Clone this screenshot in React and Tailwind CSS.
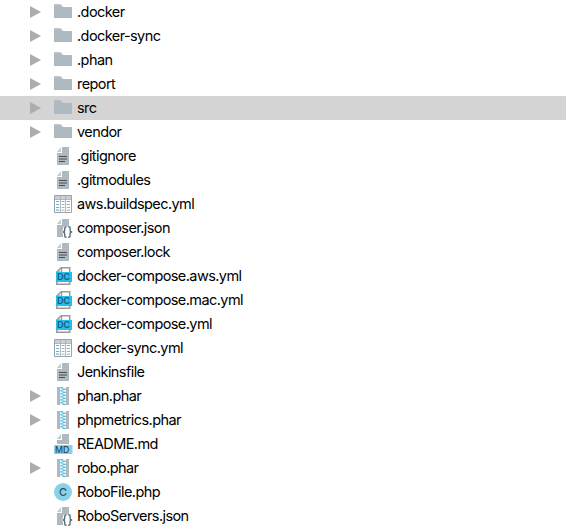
const GREY = '#aeb9c0';

function Page() {
  return (
    <g fill={GREY}>
      <path d="M8 0H15V18H3V6H8Z" />
      <path d="M7 0V5H3L7 0Z" fillOpacity=".75" />
    </g>
  );
}

function FolderIcon() {
  return <path d="M0 1.3H6.6L9 4H18V15H0Z" fill={GREY} />;
}

function TextIcon() {
  return (
    <>
      <Page />
      <path d="M5 9.5H13M5 12H13M5 14.5H11" stroke="#4b5054" strokeWidth="1.1" />
    </>
  );
}

function TableIcon() {
  return (
    <>
      <path d="M.5 .5H17.5V17.5H.5Z" fill="#fff" stroke="#97a3ad" />
      <path d="M1 1H17V4H1Z" fill="#c9d1d6" />
      <path d="M1 4.5H17M6.5 1V17M11.5 1V17" stroke="#a5b1ba" strokeWidth=".9" />
      <path d="M2 6.5H5.3M2 9.5H5.3M2 12.5H5.3M2 15.2H5.3" stroke="#6fb3d0" strokeWidth="1.2" />
      <path d="M7.7 6.5H10.5M12.7 6.5H16M7.7 9.5H10.5M12.7 9.5H16M7.7 12.5H10.5M12.7 12.5H16M7.7 15.2H10.5M12.7 15.2H16" stroke="#9eadb7" strokeWidth="1" />
    </>
  );
}

function JsonIcon() {
  return (
    <>
      <path d="M8 0H15V7H10L9 9V11.5L7.5 13L9 14.5V18H3V6H8Z" fill={GREY} />
      <path d="M7 0V5H3Z" fill={GREY} fillOpacity=".75" />
      <g fill="none" stroke="#5d6f7e" strokeWidth="1.4">
        <path d="M12.6 7.7H12Q10.7 7.7 10.7 9.2V11.2Q10.7 13 8.6 13Q10.7 13 10.7 14.8V16.8Q10.7 18.3 12 18.3H12.6" />
        <path d="M14.2 7.7H14.8Q16.1 7.7 16.1 9.2V11.2Q16.1 13 18.2 13Q16.1 13 16.1 14.8V16.8Q16.1 18.3 14.8 18.3H14.2" />
      </g>
    </>
  );
}

function DockerComposeIcon() {
  return (
    <>
      <path d="M7.2 .8H15.7V17.2H2.8V5.2Z" fill="#fff" stroke="#9a9a9a" strokeWidth="1.6" />
      <path d="M7.6 1V5.2H3" fill="none" stroke="#9a9a9a" strokeWidth="1.2" />
      <path d="M2 5H18V15H2Z" fill="#23bced" />
      <text x="9.7" y="13.2" textAnchor="middle" fontSize="8.8" fontWeight="600" fill="#24566d">DC</text>
    </>
  );
}

function ArchiveIcon() {
  return (
    <>
      <path d="M3 0H15V18H3Z" fill={GREY} />
      <path d="M6 0H12V18H6Z" fill="#edf8fc" />
      {[0, 3, 6, 9, 12, 15].map((y) => (
        <path key={y} d={`M6.3 ${y + 0.8}H9.3M8.7 ${y + 2.3}H11.7`} stroke="#52b9dc" strokeWidth="1.2" />
      ))}
    </>
  );
}

function MarkdownIcon() {
  return (
    <>
      <path d="M8 -1H15V9H3V5H8Z" fill={GREY} />
      <path d="M7 -1V4H3Z" fill={GREY} fillOpacity=".75" />
      <path d="M0 10H18.5V19H0Z" fill="#8ad1ea" />
      <text x="8.2" y="17.8" textAnchor="middle" fontSize="8.8" fontWeight="500" fill="#294b5a">MD</text>
    </>
  );
}

function ClassIcon() {
  return (
    <>
      <circle cx="9" cy="9" r="9" fill="#8ad1ea" />
      <text x="9" y="13" textAnchor="middle" fontSize="11" fontWeight="500" fill="#31505f">C</text>
    </>
  );
}

const files = [
  ['.docker', FolderIcon, true],
  ['.docker-sync', FolderIcon, true],
  ['.phan', FolderIcon, true],
  ['report', FolderIcon, true],
  ['src', FolderIcon, true],
  ['vendor', FolderIcon, true],
  ['.gitignore', TextIcon],
  ['.gitmodules', TextIcon],
  ['aws.buildspec.yml', TableIcon],
  ['composer.json', JsonIcon],
  ['composer.lock', TextIcon],
  ['docker-compose.aws.yml', DockerComposeIcon],
  ['docker-compose.mac.yml', DockerComposeIcon],
  ['docker-compose.yml', DockerComposeIcon],
  ['docker-sync.yml', TableIcon],
  ['Jenkinsfile', TextIcon],
  ['phan.phar', ArchiveIcon, true],
  ['phpmetrics.phar', ArchiveIcon, true],
  ['README.md', MarkdownIcon],
  ['robo.phar', ArchiveIcon, true],
  ['RoboFile.php', ClassIcon],
  ['RoboServers.json', JsonIcon],
];

export default function App() {
  return (
    <ul className="h-[531px] w-[566px] overflow-hidden bg-white font-['Inter',sans-serif] text-[14.5px] tracking-[-0.58px] text-black">
      {files.map(([name, Icon, expandable]) => (
        <li key={name} className={`flex h-6 items-center pl-[30px] ${name === 'src' ? 'bg-[#d4d4d4]' : ''}`}>
          <svg className="mr-[13px] h-3 w-[11px] shrink-0" viewBox="0 0 11 12">
            {expandable && <path d="M0 0L11 6L0 12Z" fill="#adadad" />}
          </svg>
          <svg className="mr-[5px] h-[18px] w-[18px] shrink-0 overflow-visible tracking-normal" viewBox="0 0 18 18">
            <Icon />
          </svg>
          <span className="whitespace-nowrap leading-6">{name}</span>
        </li>
      ))}
    </ul>
  );
}
